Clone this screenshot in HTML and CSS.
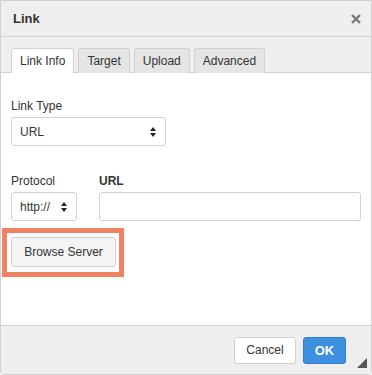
FILE: index.html
```html
<!DOCTYPE html>
<html lang="en">
<head>
    <meta charset="UTF-8">
    <title>Link</title>
    <link rel="stylesheet" href="styles.css">
</head>
<body>
    <div class="dialog">
        <!-- Title bar -->
        <div class="dialog-title">
            <span>Link</span>
            <svg class="close" viewBox="0 0 12 12">
                <path d="M2 2 L10 10 M10 2 L2 10"/>
            </svg>
        </div>

        <!-- Tabs -->
        <div class="tabs">
            <div class="tab active">Link Info</div>
            <div class="tab">Target</div>
            <div class="tab">Upload</div>
            <div class="tab">Advanced</div>
        </div>

        <!-- Body -->
        <div class="dialog-body">
            <div class="field">
                <label class="label">Link Type</label>
                <div class="select select-type">
                    <span>URL</span>
                    <svg class="arrows" viewBox="0 0 6 10">
                        <path d="M0 4 L3 0 L6 4 Z M0 6 L3 10 L6 6 Z"/>
                    </svg>
                </div>
            </div>

            <div class="row">
                <div class="field">
                    <label class="label">Protocol</label>
                    <div class="select select-protocol">
                        <span>http://</span>
                        <svg class="arrows" viewBox="0 0 6 10">
                            <path d="M0 4 L3 0 L6 4 Z M0 6 L3 10 L6 6 Z"/>
                        </svg>
                    </div>
                </div>
                <div class="field grow">
                    <label class="label bold">URL</label>
                    <div class="input"></div>
                </div>
            </div>

            <div class="highlight">
                <div class="btn">Browse Server</div>
            </div>
        </div>

        <!-- Footer -->
        <div class="dialog-footer">
            <div class="btn btn-white">Cancel</div>
            <div class="btn btn-ok">OK</div>
            <div class="resize"></div>
        </div>
    </div>
</body>
</html>
```

FILE: styles.css
```css
* {
    margin: 0;
    padding: 0;
    box-sizing: border-box;
}

body {
    width: 372px;
    height: 375px;
    overflow: hidden;
    font-family: 'Liberation Sans', Arial, sans-serif;
    font-size: 12px;
    color: #333;
    background: #fff;
}

.dialog {
    width: 372px;
    height: 375px;
    border: 1px solid #d1d1d1;
    border-radius: 0 0 3px 3px;
    display: flex;
    flex-direction: column;
    background: #fff;
}

/* Title */
.dialog-title {
    height: 36px;
    background: #efefef;
    border-bottom: 1px solid #d1d1d1;
    display: flex;
    align-items: center;
    justify-content: space-between;
    padding: 0 9px 0 12px;
    font-weight: bold;
    font-size: 13px;
    color: #333;
}

.close {
    width: 12px;
    height: 12px;
    stroke: #777;
    stroke-width: 2.4;
    fill: none;
}

/* Tabs */
.tabs {
    height: 36px;
    background: #efefef;
    border-bottom: 1px solid #d1d1d1;
    display: flex;
    align-items: flex-end;
    gap: 4px;
    padding-left: 10px;
}

.tab {
    height: 25px;
    padding: 0 8px;
    border: 1px solid #d1d1d1;
    border-bottom: none;
    border-radius: 3px 3px 0 0;
    background: #e5e5e5;
    display: flex;
    align-items: center;
    margin-bottom: -1px;
    color: #333;
}

.tab.active {
    background: #fff;
}

/* Body */
.dialog-body {
    flex: 1;
    padding: 25px 10px 0 10px;
}

.field {
    display: flex;
    flex-direction: column;
}

.label {
    line-height: 16px;
    margin-bottom: 3px;
}

.bold {
    font-weight: bold;
}

.select {
    height: 29px;
    border: 1px solid #d1d1d1;
    border-radius: 3px;
    background: #fff;
    display: flex;
    align-items: center;
    justify-content: space-between;
    padding: 0 9px 0 8px;
}

.select-type {
    width: 155px;
}

.select-protocol {
    width: 66px;
}

.arrows {
    width: 6px;
    height: 10px;
    fill: #222;
}

.row {
    display: flex;
    gap: 22px;
    margin-top: 27px;
}

.grow {
    flex: 1;
}

.input {
    height: 29px;
    border: 1px solid #d1d1d1;
    border-radius: 3px;
    background: #fff;
}

.highlight {
    width: 122px;
    margin: 7px 0 0 -9px;
    border: 5px solid #f08262;
    padding: 4px 3px 5px 4px;
}

.btn {
    height: 30px;
    border: 1px solid #d1d1d1;
    border-radius: 3px;
    background: #f4f4f4;
    display: flex;
    align-items: center;
    justify-content: center;
    white-space: nowrap;
    color: #333;
}

/* Footer */
.dialog-footer {
    height: 49px;
    background: #efefef;
    border-top: 1px solid #d1d1d1;
    display: flex;
    align-items: center;
    justify-content: flex-end;
    gap: 7px;
    padding-right: 25px;
    position: relative;
}

.btn-white {
    background: #fff;
    height: 27px;
    width: 62px;
}

.btn-ok {
    background: #3d8fe0;
    border-color: #2f7fcf;
    color: #fff;
    font-weight: bold;
    font-size: 13px;
    height: 27px;
    width: 43px;
}

.resize {
    position: absolute;
    right: 4px;
    bottom: 6px;
    width: 0;
    height: 0;
    border-left: 10px solid transparent;
    border-bottom: 10px solid #555;
}
```
